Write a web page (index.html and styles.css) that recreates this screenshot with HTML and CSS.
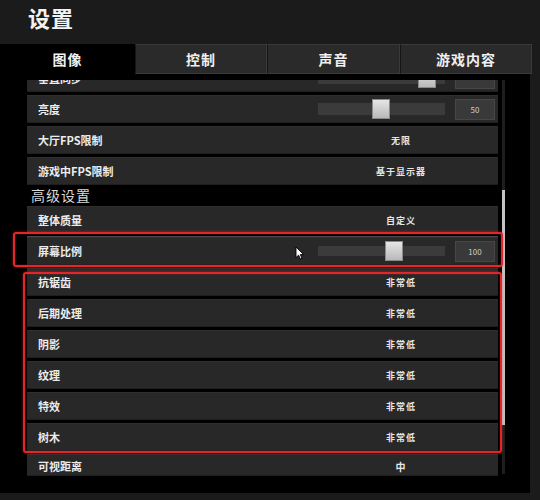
FILE: index.html
```html
<!DOCTYPE html>
<html lang="zh">
<head>
<meta charset="utf-8">
<link rel="stylesheet" href="styles.css">
</head>
<body>
<div class="app">
  <header class="top">
    <h1 class="title">设置</h1>
  </header>
  <nav class="tabs">
    <div class="tab active">图像</div>
    <div class="tab t2">控制</div>
    <div class="tab t3">声音</div>
    <div class="tab t4">游戏内容</div>
  </nav>
  <main class="panel">
    <div class="list">
      <div class="row first">
        <div class="label">垂直同步</div>
        <div class="track"><div class="thumb" style="left:100px"></div></div>
        <div class="vbox"></div>
      </div>
      <div class="row">
        <div class="label">亮度</div>
        <div class="track"><div class="thumb" style="left:54px"></div></div>
        <div class="vbox">50</div>
      </div>
      <div class="row">
        <div class="label">大厅FPS限制</div>
        <div class="value">无限</div>
      </div>
      <div class="row">
        <div class="label">游戏中FPS限制</div>
        <div class="value">基于显示器</div>
      </div>
      <div class="section">高级设置</div>
      <div class="row">
        <div class="label">整体质量</div>
        <div class="value">自定义</div>
      </div>
      <div class="row boxed">
        <div class="label">屏幕比例</div>
        <div class="track thin"><div class="thumb" style="left:67px"></div></div>
        <div class="vbox">100</div>
      </div>
      <div class="row">
        <div class="label">抗锯齿</div>
        <div class="value">非常低</div>
      </div>
      <div class="row">
        <div class="label">后期处理</div>
        <div class="value">非常低</div>
      </div>
      <div class="row">
        <div class="label">阴影</div>
        <div class="value">非常低</div>
      </div>
      <div class="row">
        <div class="label">纹理</div>
        <div class="value">非常低</div>
      </div>
      <div class="row">
        <div class="label">特效</div>
        <div class="value">非常低</div>
      </div>
      <div class="row">
        <div class="label">树木</div>
        <div class="value">非常低</div>
      </div>
      <div class="row last">
        <div class="label">可视距离</div>
        <div class="value">中</div>
      </div>
    </div>
    <div class="scroll"><div class="scroll-thumb"></div></div>

    <div class="mark mark1"></div>
    <div class="mark mark2"></div>
    <svg class="cursor" width="10" height="14" viewBox="0 0 10 14">
      <path d="M1 1 L1 11.5 L3.6 9.2 L5.4 13 L7 12.3 L5.3 8.6 L8.6 8.6 Z" fill="#fff" stroke="#000" stroke-width="0.9" stroke-linejoin="round"/>
    </svg>
  </main>
</div>
</body>
</html>
```

FILE: styles.css
```css
* { box-sizing: border-box; margin: 0; padding: 0; }

html, body {
  width: 540px;
  height: 500px;
  background: #1b1b1b;
  overflow: hidden;
  font-family: "Noto Sans CJK SC", "Noto Sans", sans-serif;
  color: #e8e8e8;
}

.top {
  height: 44px;
  padding: 3px 0 0 28px;
}

.title {
  font-size: 22px;
  font-weight: 700;
  line-height: 28px;
  color: #f2f2f2;
  letter-spacing: 1px;
}

.tabs {
  display: flex;
  height: 30px;
}

.tab {
  width: 132px;
  height: 30px;
  line-height: 29px;
  text-align: center;
  font-size: 14px;
  font-weight: 700;
  letter-spacing: 1px;
  color: #f0f0f0;
  background: #2a2a2a;
  border: 1px solid #3a3a3a;
  border-left-color: #161616;
}

.tab.active {
  width: 135px;
  background: #000;
  border-color: #000;
}

.tab.t3 { width: 133px; }

.panel {
  position: relative;
  display: flex;
  width: 530px;
  height: 419px;
  background: #000;
  padding: 6px 0 0 27px;
}

.list {
  width: 471px;
  height: 396px;
  overflow: hidden;
  display: flex;
  flex-direction: column;
  gap: 3px;
}

.row {
  flex: none;
  display: flex;
  align-items: center;
  height: 28px;
  background: #282828;
  border-top: 1px solid #2f2f2f;
  border-bottom: 1px solid #1e1e1e;
}

.row.first { margin-top: -16px; }

.row.last {
  height: 22px;
  align-items: flex-end;
  padding-bottom: 1px;
}

.row.boxed {
  outline: 1px solid #4c4c4c;
}

.label {
  width: 291px;
  padding-left: 11px;
  font-size: 11px;
  font-weight: 700;
  color: #ececec;
  white-space: nowrap;
}

.value {
  width: 166px;
  text-align: center;
  font-size: 9px;
  font-weight: 700;
  letter-spacing: 1px;
  color: #e6e6e6;
}

.row.last .value { font-size: 10px; }

.track {
  position: relative;
  width: 127px;
  height: 12px;
  background: #3b3b3b;
  margin-right: 10px;
}

.track.thin { height: 10px; }

.thumb {
  position: absolute;
  top: 50%;
  width: 18px;
  height: 20px;
  margin-top: -10px;
  background: linear-gradient(#e6e6e6, #b9b9b9);
  border: 1px solid #8a8a8a;
}

.vbox {
  width: 40px;
  height: 21px;
  line-height: 20px;
  text-align: center;
  font-size: 8px;
  color: #cfcfcf;
  background: #393939;
  border: 1px solid #474747;
}

.section {
  flex: none;
  height: 15px;
  line-height: 15px;
  padding-left: 4px;
  font-size: 14px;
  letter-spacing: 1px;
  color: #d8d8d8;
}

.scroll {
  width: 3px;
  margin-left: 4px;
  height: 394px;
  background: #1e1e1e;
}

.scroll-thumb {
  width: 3px;
  height: 235px;
  margin-top: 110px;
  background: #c4c4c4;
}

.mark {
  position: absolute;
  border: 2px solid #e2262a;
  border-radius: 3px;
  box-shadow: 0 0 3px rgba(255, 40, 40, 0.55), inset 0 0 2px rgba(255, 40, 40, 0.4);
}

.mark1 { left: 13px; top: 158px; width: 490px; height: 35px; }
.mark2 { left: 23px; top: 198px; width: 479px; height: 181px; }

.cursor {
  position: absolute;
  left: 295px;
  top: 172px;
}
```
